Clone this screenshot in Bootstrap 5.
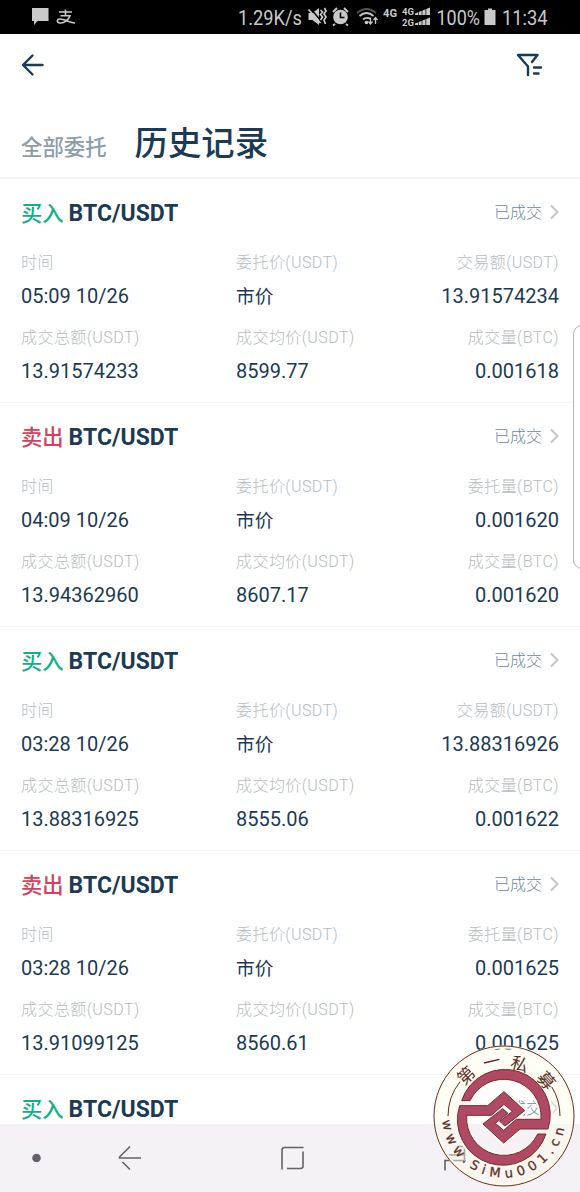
<!DOCTYPE html>
<html lang="zh-CN">
<head>
    <meta charset="UTF-8">
    <meta name="viewport" content="width=device-width, initial-scale=1.0">
    <title>历史记录</title>
    <link href="https://cdn.jsdelivr.net/npm/bootstrap@5.3.3/dist/css/bootstrap.min.css" rel="stylesheet">
    <style>
        body {
            font-family: Roboto, "Noto Sans CJK SC", sans-serif;
            color: #1b3a54;
            background: #fff;
            overflow: hidden;
        }

        .screen { width: 580px; height: 1192px; overflow: hidden; }
        .status-bar { height: 34px; background: #000; }
        .app-header { height: 145px; border-bottom: 2px solid #f4f5f6; }
        .top-actions { height: 62px; padding: 0 37px 0 21px; }
        .tab-row { padding: 26px 21px 0; }
        .tab-muted { font-size: 21.4px; font-weight: 500; line-height: 30px; padding-top: 8px; color: #8d9dac; }
        .tab-current { font-size: 33.4px; font-weight: 500; line-height: 44px; margin: 0 0 0 28px; }

        .order { height: 224px; padding: 17px 21px 0; border-bottom: 1px solid #f4f5f6; }
        .order-head { height: 32px; }
        .order-title { font-size: 23px; font-weight: 700; line-height: 32px; margin: 0; padding-top: 3px; }
        .side-buy, .side-sell { font-size: 21.3px; font-weight: 500; margin-right: 5px; }
        .side-buy { color: #12ae86; }
        .side-sell { color: #d5405e; }
        .order-state { font-size: 16px; font-weight: 300; line-height: 32px; padding-top: 1px; color: #74879a; }
        .order-state svg { margin-bottom: 2px; }
        .order-row { height: 75px; }
        .order-row > div { white-space: nowrap; }
        .order-head + .order-row { margin-top: 23px; }
        .col-first { width: 215px; }
        .cell-label { font-size: 16px; font-weight: 300; line-height: 24px; letter-spacing: .45px; color: #b5bcc3; }
        .cell-value { font-size: 20px; line-height: 30px; margin-top: 6px; }
        .value-cn { font-size: 18.7px; }

        .nav-keys { height: 68px; background: #f5f1f6; }
        .edge-handle {
            top: 325px; right: -12px; width: 19px; height: 244px;
            border: 1px solid #b5b5b5; border-radius: 9px; background: #fff;
        }
        .stamp { left: 432.7px; top: 1045.3px; }
        .stamp text { fill: #5b3025; }
        .stamp-halo text { fill: none; stroke: #fffbea; stroke-width: 9px; stroke-linejoin: round; }
    </style>
</head>
<body>
    <div class="screen position-relative d-flex flex-column">
        <!-- Status bar -->
        <div class="status-bar flex-shrink-0">
            <svg class="d-block" width="580" height="34" fill="#c9c9c9" font-family="Roboto, sans-serif">
                <path d="M32 8h16.500v13H37.500l-3.500 4v-4h-2z"/>
                <g fill="none" stroke="#c9c9c9" stroke-width="1.600">
                    <path d="M59 12h13M65.500 9.500v6M60.500 15.700h9.500C68.500 20 64 23.500 60 23c-4-.6-3-4 0-4 4 0 10 3.500 15 4"/>
                </g>
                <text x="238" y="25" font-size="21" textLength="64" lengthAdjust="spacingAndGlyphs">1.29K/s</text>
                <path d="M308.500 13h4l6.500-5v17l-6.500-5h-4z"/>
                <path d="M310 8l12 14" stroke="#000" stroke-width="1.500"/>
                <path d="M308.500 9.500l12 13.500M320.500 10l2 2-2 2.500 2 2.500-2 3M324.500 8l1.500 3-2 3 2 3-2 3 1.500 4" fill="none" stroke="#c9c9c9" stroke-width="1.700"/>
                <circle cx="340.500" cy="17" r="7.300"/>
                <path d="M333 12l4-4M348 12l-4-4M335 24l-2 1.500M346 24l2 1.500" stroke="#c9c9c9" stroke-width="2"/>
                <path d="M340.500 12.500v5h4" fill="none" stroke="#000" stroke-width="1.600"/>
                <g fill="none" stroke="#c9c9c9" stroke-width="1.800">
                    <path d="M357 13q9.500-8 19 0" stroke="#555"/>
                    <path d="M359.500 16q7-6 14 0M363 19.500q3.500-3 7.500-.5"/>
                    <path d="M370.500 17.500v6m-2-2l2 2.500 2-2.500M375.500 24v-6m-2 2l2-2.500 2 2.500" stroke-width="1.300"/>
                </g>
                <circle cx="366.500" cy="22.500" r="1.800"/>
                <g font-family="Roboto, sans-serif" font-weight="700">
                    <text x="383" y="16.500" font-size="10.500" textLength="14" lengthAdjust="spacingAndGlyphs">4G</text>
                    <text x="402" y="15" font-size="9" textLength="12" lengthAdjust="spacingAndGlyphs">4G</text>
                    <text x="402" y="25.500" font-size="9" textLength="12" lengthAdjust="spacingAndGlyphs">2G</text>
                </g>
                <path d="M415 15v-1.500l15-6V15zM415 25v-1.500l15-6V25z"/>
                <path d="M418.500 7v19M422 7v19M425.800 7v19" stroke="#000" stroke-width=".7"/>
                <text x="436.500" y="25" font-size="21" textLength="43.500" lengthAdjust="spacingAndGlyphs">100%</text>
                <path d="M488 8.500h4V10h3.500v15h-11V10h3.500z"/>
                <text x="502" y="25" font-size="21" textLength="45.500" lengthAdjust="spacingAndGlyphs">11:34</text>
            </svg>
        </div>

        <!-- Header -->
        <header class="app-header flex-shrink-0">
            <div class="top-actions d-flex justify-content-between align-items-center">
                <svg width="24" height="24" fill="none" stroke="#1b3a54" stroke-width="2.400" stroke-linecap="round" stroke-linejoin="round">
                    <path d="M11.500 2.500L2 12l9.500 9.500M2 12h19.500"/>
                </svg>
                <svg width="27" height="24" fill="none" stroke="#1b3a54" stroke-width="2.400" stroke-linecap="round" stroke-linejoin="round">
                    <path d="M12 22v-8.500L2 2h19.500L16 9M18 14.500h7M18 20.500h4.500"/>
                </svg>
            </div>
            <div class="tab-row d-flex align-items-center">
                <span class="tab-muted">全部委托</span>
                <h1 class="tab-current">历史记录</h1>
            </div>
        </header>

        <!-- Orders -->
        <main class="flex-grow-1 overflow-hidden" id="orders"></main>

        <!-- System keys -->
        <div class="nav-keys flex-shrink-0">
            <svg class="d-block" width="580" height="68" fill="none" stroke="#656168" stroke-width="1.600">
                <circle cx="36.500" cy="34" r="4.300" fill="#656168" stroke="none"/>
                <path d="M130 22.500L119.500 33v1H141M122.500 38l7.500 7.500"/>
                <path d="M282 45.500V26q0-2.500 2.500-2.500h19M303 27.500V42q0 2.500-2.500 2.500H287"/>
                <path d="M458 22.500h6.500V37M447 31h17.500M466 36.500H445v10"/>
            </svg>
        </div>

        <div class="edge-handle position-absolute"></div>

        <!-- Round stamp -->
        <svg class="stamp position-absolute" width="142" height="142" viewBox="38 46 426 426">
            <defs>
                <path id="arcBottom" d="M66 259a185 185 0 0 0 370 0"/>
                <path id="sideArcs" d="M83 259A168 168 0 0 1 119 156M419 259A168 168 0 0 0 394 171"/>
                <!-- one hook of the emblem; the other is the same one turned by 180 degrees -->
                <path id="hook" d="M118 228H202L251 186L313 243L254 289L238 275L276 245L251 224L213 257H139A112 112 0 0 0 352 313H377A136 136 0 0 1 118 228Z"/>
            </defs>
            <g fill="none" stroke="#fffbea">
                <circle cx="251" cy="259" r="207" stroke-width="9"/>
                <circle cx="251" cy="259" r="172" stroke-width="64" stroke-opacity=".45"/>
                <use href="#sideArcs" stroke-width="12"/>
                <use href="#hook" stroke-width="14"/>
                <use href="#hook" stroke-width="14" transform="rotate(180 250.500 263)"/>
            </g>
            <g fill="none" stroke="#5b3025" stroke-width="3">
                <circle cx="251" cy="259" r="210"/>
                <use href="#sideArcs"/>
            </g>
            <g fill="#b04a63" stroke="#75283f" stroke-width="3">
                <use href="#hook"/>
                <use href="#hook" transform="rotate(180 250.500 263)"/>
            </g>
            <g font-family="Noto Sans CJK SC, sans-serif" font-size="52" text-anchor="middle">
                <text transform="translate(137 137) rotate(-43)" y="19">第</text>
                <text transform="translate(214 96) rotate(-13)" y="19">一</text>
                <text transform="translate(298 103) rotate(16)" y="19">私</text>
                <text transform="translate(378 152) rotate(48)" y="19">募</text>
            </g>
            <text font-family="DejaVu Sans, sans-serif" font-size="39" letter-spacing="15.200" stroke="#5b3025" stroke-width=".8">
                <textPath href="#arcBottom" startOffset="14">www.SiMu001.cn</textPath>
            </text>
        </svg>
    </div>

    <script src="https://cdn.jsdelivr.net/npm/bootstrap@5.3.3/dist/js/bootstrap.bundle.min.js"></script>
    <script>
        const orders = [
            { side: 'buy', time: '05:09 10/26', amount: '13.91574234', total: '13.91574233', avg: '8599.77', filled: '0.001618' },
            { side: 'sell', time: '04:09 10/26', amount: '0.001620', total: '13.94362960', avg: '8607.17', filled: '0.001620' },
            { side: 'buy', time: '03:28 10/26', amount: '13.88316926', total: '13.88316925', avg: '8555.06', filled: '0.001622' },
            { side: 'sell', time: '03:28 10/26', amount: '0.001625', total: '13.91099125', avg: '8560.61', filled: '0.001625' },
            // only the heading of the last one is in view
            { side: 'buy' }
        ];

        function cell(label, value, cls) {
            return `<div class="${cls}"><div class="cell-label">${label}</div><div class="cell-value">${value}</div></div>`;
        }

        document.getElementById('orders').innerHTML = orders.map(o => `
            <section class="order">
                <div class="order-head d-flex justify-content-between align-items-center">
                    <h2 class="order-title"><span class="side-${o.side}">${o.side === 'buy' ? '买入' : '卖出'}</span>BTC/USDT</h2>
                    <span class="order-state d-flex align-items-center gap-2">已成交
                        <svg width="9" height="16" fill="none" stroke="#c0c6cc" stroke-width="2"><path d="M1 1.500L7.500 8 1 14.500"/></svg>
                    </span>
                </div>
                ${o.time ? `<div class="order-row d-flex">
                    ${cell('时间', o.time, 'col-first')}
                    ${cell('委托价(USDT)', '<span class="value-cn">市价</span>', 'flex-grow-1')}
                    ${cell(o.side === 'buy' ? '交易额(USDT)' : '委托量(BTC)', o.amount, 'text-end')}
                </div>
                <div class="order-row d-flex">
                    ${cell('成交总额(USDT)', o.total, 'col-first')}
                    ${cell('成交均价(USDT)', o.avg, 'flex-grow-1')}
                    ${cell('成交量(BTC)', o.filled, 'text-end')}
                </div>` : ''}
            </section>`).join('');
    </script>
</body>
</html>
